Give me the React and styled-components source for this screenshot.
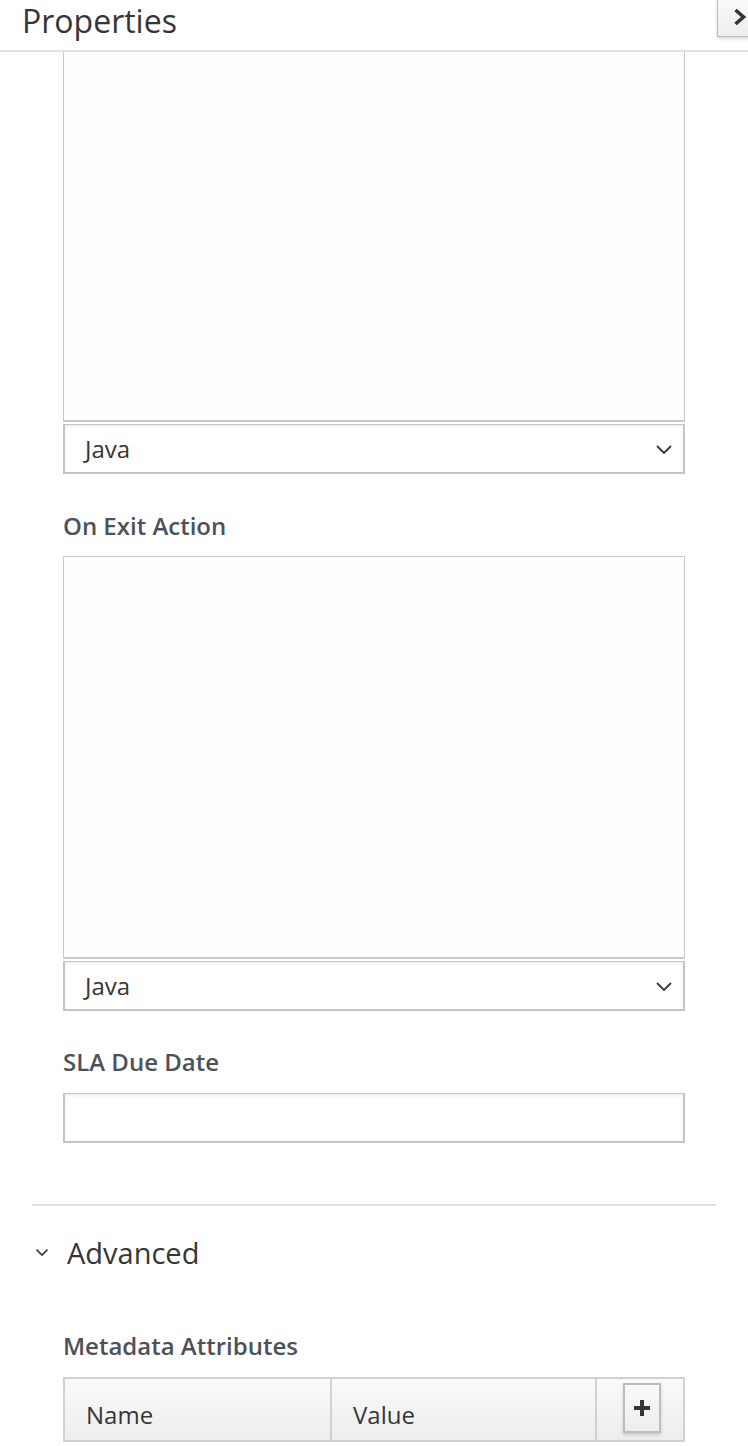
import React from 'react';
import styled, { createGlobalStyle } from 'styled-components';

const GlobalStyle = createGlobalStyle`
  html, body {
    margin: 0;
    padding: 0;
    background: #fff;
    font-family: "Open Sans", "Liberation Sans", sans-serif;
    color: #4d5258;
  }
`;

const Panel = styled.div`
  width: 748px;
  height: 1446px;
  overflow: hidden;
  display: flex;
  flex-direction: column;
`;

const Header = styled.div`
  position: relative;
  height: 52px;
  flex: none;
  border-bottom: 2px solid #e1e1e1;
  display: flex;
  align-items: flex-start;
  padding: 0 0 0 22px;
  box-sizing: border-box;
`;

const Title = styled.h2`
  margin: 0;
  font-size: 32px;
  font-weight: 400;
  color: #363636;
  line-height: 44px;
  margin-top: -1px;
`;

const CollapseButton = styled.button`
  position: absolute;
  top: -1px;
  left: 717px;
  width: 40px;
  height: 38px;
  padding: 8px 0 0 15px;
  border: 1px solid #bbb;
  background: linear-gradient(#fafafa, #ededed);
  box-shadow: 0 2px 3px rgba(0, 0, 0, 0.15);
  display: flex;
  align-items: flex-start;
  color: #363636;
`;

const Body = styled.div`
  flex: 1;
  overflow: hidden;
  padding: 0 32px;
`;

const Section = styled.div`
  padding: 0 31px;
  display: flex;
  flex-direction: column;
`;

const Label = styled.label`
  display: block;
  font-size: 24px;
  font-weight: 600;
  line-height: 30px;
  color: #4d5258;
  margin-top: ${p => p.$top || 0}px;
  margin-bottom: ${p => p.$bottom || 15}px;
`;

const Editor = styled.div`
  height: ${p => p.$height}px;
  box-sizing: border-box;
  background: #fdfdfb;
  border: 1px solid #c9c9c9;
  border-bottom-width: 2px;
  ${p => p.$cut && 'border-top: none;'}
`;

const SelectBox = styled.div`
  margin-top: 2px;
  height: 50px;
  box-sizing: border-box;
  border: 2px solid #c4c4c4;
  border-top-width: 1px;
  box-shadow: inset 0 2px 3px rgba(0, 0, 0, 0.06);
  background: #fff;
  display: flex;
  align-items: center;
  justify-content: space-between;
  padding: 0 10px 0 20px;
  font-size: 24px;
  color: #363636;
`;

const TextInput = styled.div`
  height: 50px;
  box-sizing: border-box;
  border: 2px solid #c4c4c4;
  border-top-width: 1px;
  box-shadow: inset 0 2px 3px rgba(0, 0, 0, 0.06);
  background: #fff;
`;

const Divider = styled.hr`
  margin: 61px 0 0;
  border: none;
  border-top: 2px solid #e1e1e1;
`;

const GroupToggle = styled.div`
  margin-top: 29px;
  height: 34px;
  display: flex;
  align-items: center;
  gap: 18px;
  padding-left: 3px;
  font-size: 29px;
  color: #363636;
`;

const Table = styled.div`
  display: grid;
  grid-template-columns: 267px 265px 1fr;
  height: 65px;
  box-sizing: border-box;
  border: 2px solid #d1d1d1;
  background: linear-gradient(#fafafa, #ededed);
`;

const HeadCell = styled.div`
  display: flex;
  align-items: center;
  padding-left: ${p => p.$pad ?? 21}px;
  padding-top: 10px;
  font-size: 24px;
  color: #363636;
  border-right: ${p => (p.$last ? 'none' : '2px solid #d1d1d1')};
  justify-content: ${p => (p.$center ? 'center' : 'flex-start')};
`;

const AddButton = styled.button`
  width: 38px;
  height: 50px;
  margin-top: -14px;
  margin-left: 3px;
  border: 2px solid #bdbdbd;
  background: linear-gradient(#fafafa, #ededed);
  box-shadow: 0 2px 3px rgba(0, 0, 0, 0.15);
  display: flex;
  align-items: center;
  justify-content: center;
  padding: 0;
`;

const Chevron = ({ size = 18, width = 1.8, color = '#363636' }) => (
  <svg width={size} height={size} viewBox="0 0 18 18" fill="none">
    <path d="M2 6l7 7 7-7" stroke={color} strokeWidth={width} />
  </svg>
);

export default function App() {
  return (
    <Panel>
      <GlobalStyle />
      <Header>
        <Title>Properties</Title>
        <CollapseButton>
          <svg width="14" height="18" viewBox="0 0 14 18">
            <path d="M2.5 2l8 7-8 7" stroke="#363636" strokeWidth="3.6" fill="none" />
          </svg>
        </CollapseButton>
      </Header>
      <Body>
        <Section>
          <Editor $cut $height={370} />
          <SelectBox>
            <span>Java</span>
            <Chevron />
          </SelectBox>

          <Label $top={37}>On Exit Action</Label>
          <Editor $height={403} />
          <SelectBox>
            <span>Java</span>
            <Chevron />
          </SelectBox>

          <Label $top={36} $bottom={16}>SLA Due Date</Label>
          <TextInput />
        </Section>

        <Divider />

        <GroupToggle>
          <Chevron size={14} width={2} />
          <span>Advanced</span>
        </GroupToggle>

        <Section>
          <Label $top={62} $bottom={16}>Metadata Attributes</Label>
          <Table>
            <HeadCell>Name</HeadCell>
            <HeadCell>Value</HeadCell>
            <HeadCell $last $center $pad={0}>
              <AddButton>
                <svg width="18" height="18" viewBox="0 0 18 18">
                  <path d="M9 1v16M1 9h16" stroke="#363636" strokeWidth="4" />
                </svg>
              </AddButton>
            </HeadCell>
          </Table>
        </Section>
      </Body>
    </Panel>
  );
}
